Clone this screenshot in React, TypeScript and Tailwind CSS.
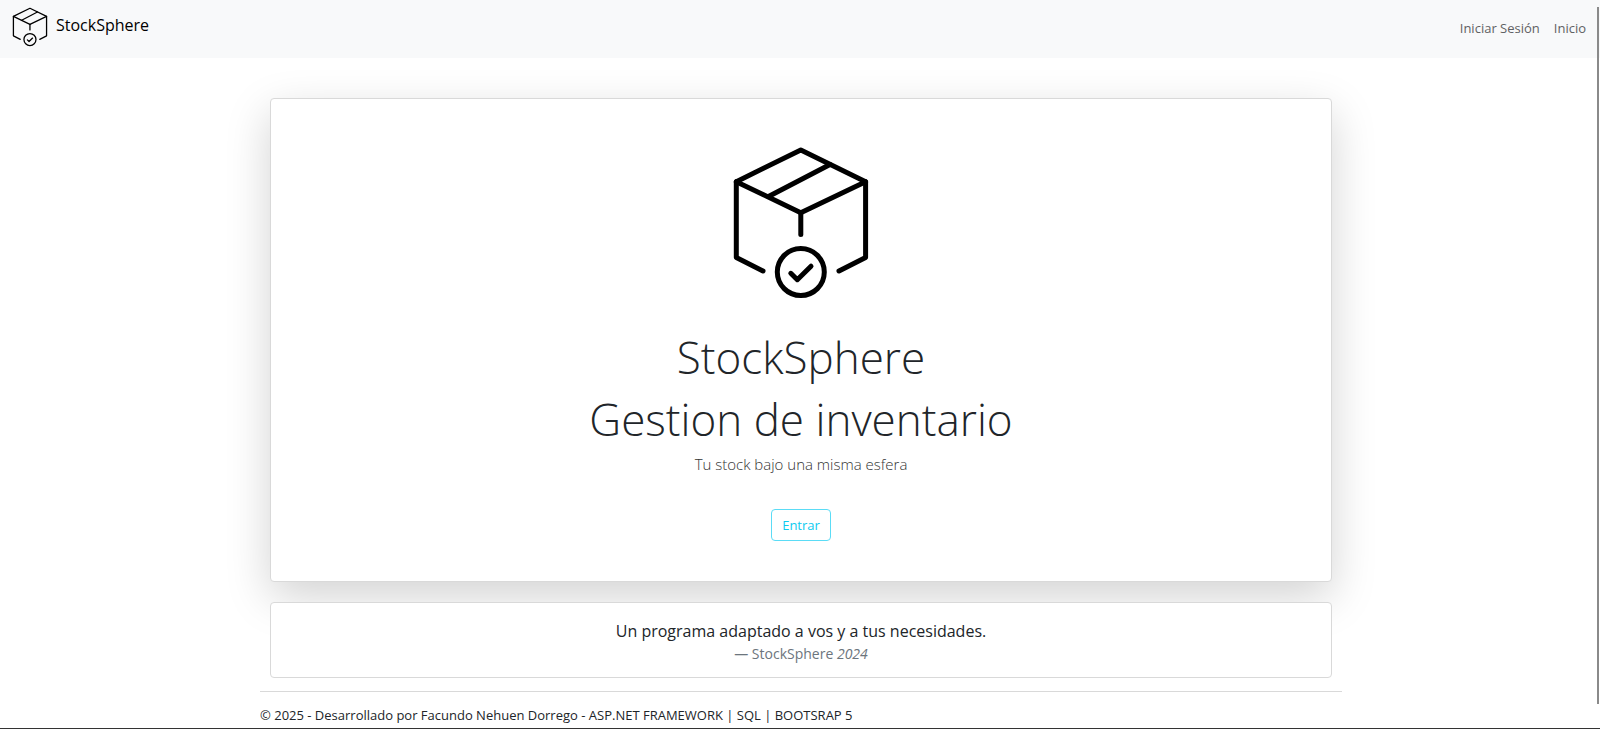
import React from "react";

function BoxLogo({ className, strokeWidth }: { className: string; strokeWidth: number }) {
  return (
    <svg
      viewBox="33 25 136 156"
      className={className}
      fill="none"
      stroke="currentColor"
      strokeWidth={strokeWidth}
      strokeLinecap="round"
      strokeLinejoin="round"
      aria-hidden="true"
    >
      <path d="M63 151 36.3 137.5V61.7L100.8 30l64.8 31.7v75.8L139 151" />
      <path d="M36.3 61.7 100.8 92.7l64.8-31" />
      <path d="M68.500 76.500 130 44.500" />
      <path d="M100.800 92.700V114.500" />
      <circle cx="100.800" cy="152" r="23.500" />
      <path d="M90.800 153.300 97.300 159.700 111 146.200" />
    </svg>
  );
}

export default function App() {
  return (
    <div className="relative flex min-h-screen flex-col border-b border-[#333] bg-white font-['Open_Sans','Noto_Sans',sans-serif] text-[#212529]">
      <header className="flex h-[58px] items-center justify-between bg-[#f8f9fa] pr-[14px] pl-3">
        <a href="#" className="flex items-center gap-2 pb-1 text-base text-black">
          <BoxLogo className="h-10 w-9" strokeWidth={5} />
          <span className="pb-1">StockSphere</span>
        </a>
        <nav className="flex gap-[14px] text-[13px] text-[#5f6163]">
          <a href="#login">Iniciar Sesión</a>
          <a href="#inicio">Inicio</a>
        </nav>
      </header>

      <div className="pt-10 pl-0.5">
        <div className="mx-auto max-w-[1082px]">
          <main className="flex flex-col gap-5 px-[10px] text-center">
            <section className="flex flex-col items-center rounded border border-[#d9d9d9] bg-white pt-[46px] pb-10 shadow-[0_15px_45px_rgba(0,0,0,0.175)]">
              <BoxLogo className="h-[156px] w-[136px] text-black" strokeWidth={5} />
              <h1 className="mt-[25px] text-[44px] leading-[62px] font-light">
                StockSphere
                <br />
                Gestion de inventario
              </h1>
              <p className="text-[15px] leading-7 font-light text-[#333]">Tu stock bajo una misma esfera</p>
              <button
                type="button"
                className="mt-[31px] h-8 rounded border border-[#5bdcf6] px-[10px] pt-0.5 text-[13px] text-[#0dcaf0]"
              >
                Entrar
              </button>
            </section>

            <figure className="rounded border border-[#d9d9d9] bg-white pt-4 pb-3">
              <blockquote className="text-base leading-6">Un programa adaptado a vos y a tus necesidades.</blockquote>
              <figcaption className="text-sm leading-[22px] text-[#6c757d]">
                — StockSphere <cite>2024</cite>
              </figcaption>
            </figure>
          </main>

          <footer className="mt-[13px] border-t border-[#d9d9d9] pt-[13px] text-[13px] leading-5">
            © 2025 - Desarrollado por Facundo Nehuen Dorrego - ASP.NET FRAMEWORK | SQL | BOOTSRAP 5
          </footer>
        </div>
      </div>

      <div className="absolute top-[7px] right-[1px] bottom-6 w-[2px] bg-[#8a8a8a]" />
    </div>
  );
}
